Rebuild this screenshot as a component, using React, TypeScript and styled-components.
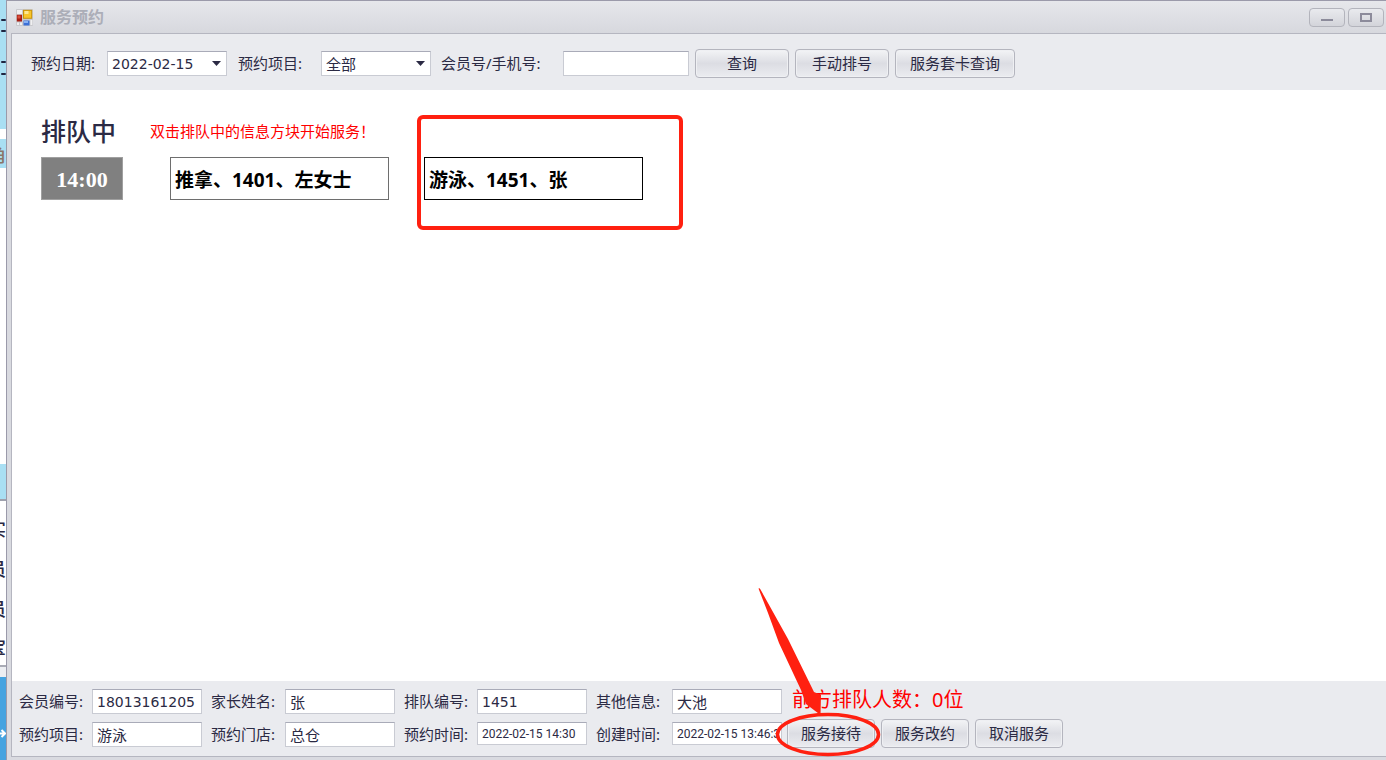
import React, { useState } from 'react';
import styled, { createGlobalStyle, css } from 'styled-components';

const sans = '"Noto Sans", "Noto Sans CJK SC", sans-serif';
const digits = '"DejaVu Sans", "Noto Sans CJK SC", sans-serif';
const ink = '#2b2a44';
const panel = '#eaebef';
const red = '#ff2010';

const GlobalStyle = createGlobalStyle`
  * { box-sizing: border-box; }
  body { margin: 0; background: #ffffff; }
  button, input, select { margin: 0; }
`;

const Screen = styled.div`
  display: flex;
  min-height: 100vh;
  font: 15px/25px ${sans};
  color: ${ink};
`;

/* Sliver of the parent form that stays visible behind the window */
const Backdrop = styled.div`
  display: flex;
  flex-direction: column;
  flex: none;
  width: 6px;
  overflow: hidden;
  background: #ffffff;
`;

const Strip = styled.div<{ $h?: number; $bg?: string }>`
  display: flex;
  flex-direction: column;
  align-items: flex-end;
  overflow: hidden;
  flex: ${(p) => (p.$h ? 'none' : '1')};
  height: ${(p) => (p.$h ? `${p.$h}px` : 'auto')};
  background: ${(p) => p.$bg ?? '#ffffff'};
`;

const Clipped = styled.span<{ $h: number; $color?: string }>`
  flex: none;
  font-size: 18px;
  font-weight: 500;
  line-height: ${(p) => p.$h}px;
  height: ${(p) => p.$h}px;
  white-space: nowrap;
  color: ${(p) => p.$color ?? ink};
`;

const Window = styled.div`
  display: flex;
  flex-direction: column;
  flex: 1;
  min-width: 0;
  border-top: 1px solid #9b9aaa;
  border-left: 1px solid #9b9aaa;
  padding: 0 0 3px 4px;
  background: #d9dae0;
`;

const TitleBar = styled.header`
  display: flex;
  align-items: center;
  height: 32px;
  margin-left: -4px;
  padding: 0 2px 0 9px;
  background: linear-gradient(#e6e7eb, #d7d8de);
`;

const Title = styled.h1`
  flex: 1;
  margin: 0 0 0 7px;
  font-size: 16px;
  line-height: 24px;
  font-weight: 700;
  color: #acaeb8;
`;

const Caption = styled.button`
  display: flex;
  align-items: center;
  justify-content: center;
  width: 36px;
  height: 19px;
  margin-left: 3px;
  padding: 0;
  border: 1px solid #b3b4bc;
  border-radius: 4px;
  background: linear-gradient(#e9eaee, #d3d4da);
`;

const Client = styled.div`
  display: flex;
  flex-direction: column;
  flex: 1;
  border: solid #b5b6c0;
  border-width: 1px 0 1px 1px;
  background: #ffffff;
`;

const Toolbar = styled.form`
  display: flex;
  align-items: center;
  padding: 15px 19px 12px;
  background: ${panel};
`;

const Label = styled.label<{ $w: number }>`
  flex: none;
  width: ${(p) => p.$w}px;
  white-space: nowrap;
`;

type Kind = 'text' | 'number' | 'small';

const fonts: Record<Kind, string> = {
  text: `15px ${sans}`,
  number: `14px ${digits}`,
  small: '12px Roboto, "Noto Sans CJK SC", sans-serif',
};

const boxed = css<{ $w: number; $kind?: Kind }>`
  display: block;
  flex: none;
  width: ${(p) => p.$w}px;
  height: ${(p) => (p.$kind === 'small' ? 23 : 25)}px;
  padding: 0 4px;
  border: 1px solid #c9cbd3;
  border-top-color: #a9abb8;
  border-radius: 0;
  outline: none;
  background: #ffffff;
  color: ${ink};
  font: ${(p) => fonts[p.$kind ?? 'text']};
`;

const TextBox = styled.input<{ $w: number; $kind?: Kind }>`
  ${boxed}
`;

const Select = styled.select<{ $w: number; $kind?: Kind }>`
  ${boxed}
  appearance: none;
`;

const SelectWrap = styled.div<{ $gap: number }>`
  position: relative;
  flex: none;
  margin-right: ${(p) => p.$gap}px;

  svg {
    position: absolute;
    right: 6px;
    top: 10px;
    pointer-events: none;
  }
`;

const Button = styled.button<{ $w: number }>`
  flex: none;
  width: ${(p) => p.$w}px;
  height: 29px;
  padding: 0;
  border: 1px solid #b4b5be;
  border-radius: 4px;
  background: linear-gradient(#f3f4f6, #dcdde3 50%, #ebecf0);
  box-shadow: inset 0 0 0 1px #eff0f3;
  color: ${ink};
  font: 15px/25px ${sans};
  white-space: nowrap;
`;

const ButtonRow = styled.div<{ $gap: number }>`
  display: flex;
  gap: ${(p) => p.$gap}px;
`;

const Queue = styled.main`
  flex: 1;
  padding: 28px 29px;
`;

const QueueHead = styled.div`
  display: flex;
  align-items: center;
  gap: 34px;
  margin-bottom: 13px;
`;

const QueueTitle = styled.h2`
  margin: 0;
  font-size: 25px;
  line-height: 26px;
  font-weight: 500;
`;

const Hint = styled.p`
  margin: 0;
  line-height: 26px;
  color: #ff0000;
`;

const QueueRow = styled.div`
  display: flex;
  gap: 35px;
`;

const Time = styled.div`
  width: 82px;
  margin-right: 12px;
  padding-top: 2px;
  border: 1px solid #a0a0a0;
  background: #808080;
  color: #ffffff;
  font: bold 22px/39px "Liberation Serif", serif;
  text-align: center;
`;

const TileWrap = styled.div`
  position: relative;
`;

const Tile = styled.button<{ $active?: boolean }>`
  display: block;
  width: 219px;
  height: 43px;
  padding: 2px 4px 0;
  border: 1px solid ${(p) => (p.$active ? '#000000' : '#6e6e6e')};
  background: #ffffff;
  color: #000000;
  font: bold 19px/28px ${sans};
  text-align: left;
  white-space: nowrap;
`;

const Highlight = styled.div`
  position: absolute;
  inset: -42px -40px -30px -7px;
  border: 4px solid ${red};
  border-radius: 6px;
  pointer-events: none;
`;

const Footer = styled.footer`
  display: flex;
  padding: 8px 7px;
  background: ${panel};
`;

const FieldRows = styled.div`
  display: flex;
  flex-direction: column;
  gap: 8px;
`;

const FieldRow = styled.div`
  display: flex;
  gap: 9px;
`;

const Field = styled.div`
  display: flex;
  align-items: flex-start;
`;

const Side = styled.div`
  display: flex;
  flex-direction: column;
  gap: 5px;
  margin-left: 5px;
`;

const Ahead = styled.p`
  margin: 0 0 0 5px;
  height: 25px;
  font-size: 20px;
  line-height: 22px;
  color: #ff0000;
  white-space: nowrap;
`;

const Marked = styled.div`
  position: relative;

  svg {
    position: absolute;
    left: -36px;
    top: -139px;
    pointer-events: none;
  }
`;

const FormIcon = () => (
  <svg width="17" height="17" viewBox="0 0 17 17" aria-hidden="true">
    <rect width="17" height="17" rx="1" fill="#c9c9cd" />
    <rect x="1" y="1" width="5" height="4" fill="#f0f0f2" />
    <rect x="1" y="13.500" width="2" height="2.500" fill="#f0f0f2" />
    <rect x="4" y="13.500" width="2" height="2.500" fill="#f0f0f2" />
    <rect x="14.500" y="11" width="1.800" height="5" fill="#f0f0f2" />
    <rect x="0.800" y="5.800" width="5.200" height="6.700" fill="#a81d12" />
    <rect x="1.500" y="6.500" width="3" height="3" fill="#d8503f" />
    <rect x="7" y="0.800" width="9.200" height="9" fill="#c9930a" />
    <rect x="8" y="1.800" width="7.200" height="7" fill="#f7c52b" />
    <rect x="8.500" y="2" width="4" height="3" fill="#fde791" />
    <rect x="7.500" y="11.500" width="6" height="5" fill="#3b6fd6" />
    <rect x="8" y="12" width="4" height="2" fill="#86b0f5" />
  </svg>
);

const DropArrow = () => (
  <svg width="9" height="5" viewBox="0 0 9 5" aria-hidden="true">
    <path d="M0 0h9L4.500 5z" fill={ink} />
  </svg>
);

const Colons = () => (
  <svg width="6" height="129" viewBox="0 0 6 129" aria-hidden="true">
    {[19, 30, 61, 73].map((y) => (
      <rect key={y} x="1" y={y} width="5" height="2" rx="1" fill="#1f2440" />
    ))}
  </svg>
);

const ArrowMark = () => (
  <svg width="132" height="180" viewBox="0 0 132 180" aria-hidden="true">
    <path d="M7.500 8.500Q8.500 7.500 9.500 9.500L37 59L63 112L70 115L69.500 135L55 124L50 110L28 63L17 33Z" fill={red} />
    <ellipse cx="77" cy="154.500" rx="50.500" ry="20" fill="none" stroke={red} strokeWidth="3.500" />
  </svg>
);

type FieldData = { id: string; label: string; value: string; kind: Kind; w: number };

const rows: FieldData[][] = [
  [
    { id: 'member', label: '会员编号:', value: '18013161205', kind: 'number', w: 73 },
    { id: 'parent', label: '家长姓名:', value: '张', kind: 'text', w: 74 },
    { id: 'queueNo', label: '排队编号:', value: '1451', kind: 'number', w: 73 },
    { id: 'other', label: '其他信息:', value: '大池', kind: 'text', w: 76 },
  ],
  [
    { id: 'item', label: '预约项目:', value: '游泳', kind: 'text', w: 73 },
    { id: 'store', label: '预约门店:', value: '总仓', kind: 'text', w: 74 },
    { id: 'bookTime', label: '预约时间:', value: '2022-02-15 14:30', kind: 'small', w: 73 },
    { id: 'createTime', label: '创建时间:', value: '2022-02-15 13:46:35', kind: 'small', w: 76 },
  ],
];

export default function App() {
  const [keyword, setKeyword] = useState('');

  return (
    <>
      <GlobalStyle />
      <Screen>
        <Backdrop aria-hidden="true">
          <Strip $h={129} $bg="#a9dff3"><Colons /></Strip>
          <Strip $h={10} />
          <Strip $h={29} $bg="#a9dff3"><Clipped $h={32} $color="#8a7468">角</Clipped></Strip>
          <Strip $h={296} />
          <Strip $h={35} $bg="#a9dff3" />
          <Strip $h={2} $bg="#9fa1ad" />
          <Strip $h={8} />
          <Strip $h={156}>
            <Clipped $h={40}>实</Clipped>
            <Clipped $h={40}>员</Clipped>
            <Clipped $h={40}>员</Clipped>
            <Clipped $h={36}>宝</Clipped>
          </Strip>
          <Strip $h={2} $bg="#a9abb5" />
          <Strip $h={10} $bg="#eceef2" />
          <Strip $bg="#45a3e0">
            <svg width="6" height="83" viewBox="0 0 6 83">
              <path d="M0 56.500h5M1.500 53L5 56.500L1.500 60" fill="none" stroke="#ffffff" strokeWidth="2" />
            </svg>
          </Strip>
        </Backdrop>

        <Window>
          <TitleBar>
            <FormIcon />
            <Title>服务预约</Title>
            <Caption type="button" aria-label="最小化">
              <svg width="12" height="10" viewBox="0 0 12 10">
                <rect y="7" width="12" height="2" fill="#8c8b9b" />
              </svg>
            </Caption>
            <Caption type="button" aria-label="最大化">
              <svg width="12" height="9" viewBox="0 0 12 9">
                <rect x="1" y="1" width="10" height="7" fill="none" stroke="#8c8b9b" strokeWidth="2" />
              </svg>
            </Caption>
          </TitleBar>

          <Client>
            <Toolbar onSubmit={(e) => e.preventDefault()}>
              <Label htmlFor="date" $w={76}>预约日期:</Label>
              <SelectWrap $gap={11}>
                <Select id="date" $w={120} $kind="number">
                  <option>2022-02-15</option>
                </Select>
                <DropArrow />
              </SelectWrap>
              <Label htmlFor="project" $w={83}>预约项目:</Label>
              <SelectWrap $gap={10}>
                <Select id="project" $w={110}>
                  <option>全部</option>
                </Select>
                <DropArrow />
              </SelectWrap>
              <Label htmlFor="keyword" $w={122}>会员号/手机号:</Label>
              <SelectWrap $gap={6}>
                <TextBox id="keyword" $w={126} value={keyword} onChange={(e) => setKeyword(e.target.value)} />
              </SelectWrap>
              <ButtonRow $gap={6}>
                <Button $w={94}>查询</Button>
                <Button type="button" $w={94}>手动排号</Button>
                <Button type="button" $w={120}>服务套卡查询</Button>
              </ButtonRow>
            </Toolbar>

            <Queue>
              <QueueHead>
                <QueueTitle>排队中</QueueTitle>
                <Hint>双击排队中的信息方块开始服务！</Hint>
              </QueueHead>
              <QueueRow>
                <Time>14:00</Time>
                <Tile type="button">推拿、1401、左女士</Tile>
                <TileWrap>
                  <Tile type="button" $active>游泳、1451、张</Tile>
                  <Highlight />
                </TileWrap>
              </QueueRow>
            </Queue>

            <Footer>
              <FieldRows>
                {rows.map((row, i) => (
                  <FieldRow key={i}>
                    {row.map((f) => (
                      <Field key={f.id}>
                        <Label htmlFor={f.id} $w={f.w}>{f.label}</Label>
                        <TextBox id={f.id} $w={110} $kind={f.kind} defaultValue={f.value} readOnly />
                      </Field>
                    ))}
                  </FieldRow>
                ))}
              </FieldRows>
              <Side>
                <Ahead>前方排队人数：0位</Ahead>
                <ButtonRow $gap={6}>
                  <Marked>
                    <Button type="button" $w={88}>服务接待</Button>
                    <ArrowMark />
                  </Marked>
                  <Button type="button" $w={88}>服务改约</Button>
                  <Button type="button" $w={88}>取消服务</Button>
                </ButtonRow>
              </Side>
            </Footer>
          </Client>
        </Window>
      </Screen>
    </>
  );
}
